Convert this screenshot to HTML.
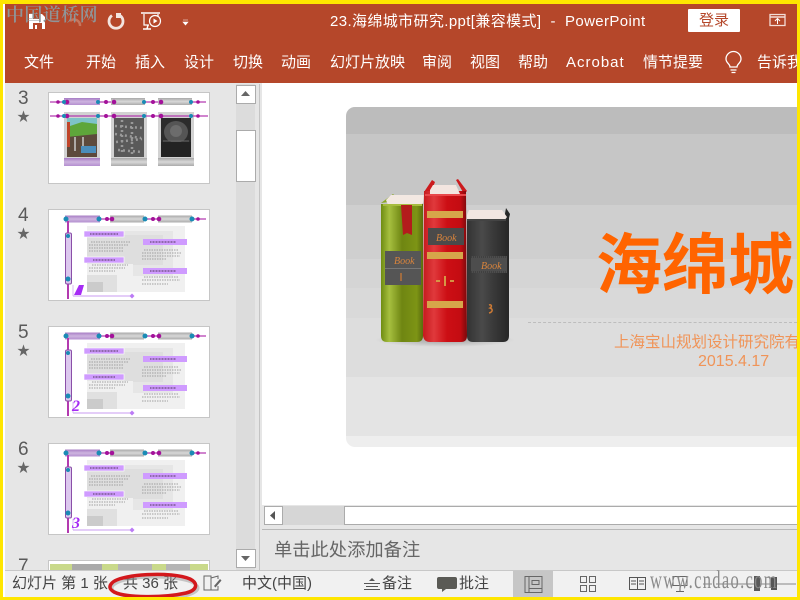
<!DOCTYPE html>
<html lang="zh"><head><meta charset="utf-8"><title>PowerPoint</title>
<style>
html,body{margin:0;padding:0;width:800px;height:600px;overflow:hidden;background:#ffe600}
body{position:relative;font-family:"Liberation Sans","Noto Sans CJK SC",sans-serif}
div,span,svg{position:absolute}
.t{white-space:nowrap;line-height:20px}
.r{color:#fff;font-size:15px;top:53px}
.n{color:#5a5a5a;font-size:19px;left:18px;line-height:22px}
.st{color:#666;font-size:13px;left:17px;line-height:16px}
.s{color:#444;font-size:15px;top:574px}
.thumb{left:48px;width:162px;height:92px}
</style></head><body>
<div style="left:3px;top:4px;width:794px;height:593px;background:#fff"></div>
<div style="left:5px;top:4px;width:792px;height:79px;background:#b5472a"></div>
<div style="left:5px;top:83px;width:257px;height:487px;background:#e6e6e6"></div>
<div style="left:236px;top:84px;width:19px;height:486px;background:#dcdcdc"></div>
<div style="left:259px;top:84px;width:1px;height:486px;background:#c4c4c4"></div>

<!-- QAT icons -->
<svg style="left:0;top:0" width="800" height="84" viewBox="0 0 800 84">
<path d="M29 14h13l3 3v12H29z" fill="#fff"/><path d="M33 14h7v5h-7zM33 23h9v6h-9z" fill="#b5472a"/><path d="M35 25h2v4h-2z" fill="#fff"/>
<path d="M70 21a6 6 0 0 1 10 5" fill="none" stroke="#cf8a73" stroke-width="2.500" opacity=".7"/>
<path d="M112 15.500a7 7 0 1 0 8 0" fill="none" stroke="#f3e4df" stroke-width="2.800"/><path d="M116 13h5v5l-5 0z" fill="#f3e4df"/>
<path d="M141 13h19" stroke="#fff" stroke-width="1.500"/><path d="M144 14v11h5M158 14v2" fill="none" stroke="#fff" stroke-width="1.200"/>
<circle cx="155" cy="21" r="5.500" fill="none" stroke="#fff" stroke-width="1.200"/><path d="M153.500 18.500l4 2.500-4 2.500z" fill="#fff"/>
<path d="M148 25l-1 4M143 29h8" stroke="#fff" stroke-width="1.500" fill="none"/>
<path d="M183 20h5M183 22h5l-2.500 3z" fill="#fff" stroke="#fff" stroke-width=".6"/>
<path d="M730 67c0-3-4-4-4-8a7.500 7.500 0 0 1 15 0c0 4-4 5-4 8zM730.500 70h6M731.500 72.500h4" fill="none" stroke="#fff" stroke-width="1.300"/>
<path d="M770 14.500h15v11h-15z" fill="none" stroke="#f3ddd6" stroke-width="1.300"/><path d="M770 17h15" stroke="#f3ddd6" stroke-width="1.500"/><path d="M777.500 24v-5M775 21l2.500-2.500 2.500 2.500" fill="none" stroke="#fff"/>
</svg>

<div class="t" style="left:330px;top:12px;color:#fff;font-size:15px;letter-spacing:.38px">23.海绵城市研究.ppt[兼容模式]&nbsp; - &nbsp;PowerPoint</div>
<div style="left:688px;top:9px;width:52px;height:23px;background:#fff;border-radius:1px"></div>
<div class="t" style="left:699px;top:11px;color:#b5472a;font-size:15px">登录</div>
<div class="t r" style="left:24px">文件</div>
<div class="t r" style="left:86px">开始</div>
<div class="t r" style="left:135px">插入</div>
<div class="t r" style="left:184px">设计</div>
<div class="t r" style="left:233px">切换</div>
<div class="t r" style="left:281px">动画</div>
<div class="t r" style="left:330px">幻灯片放映</div>
<div class="t r" style="left:422px">审阅</div>
<div class="t r" style="left:470px">视图</div>
<div class="t r" style="left:518px">帮助</div>
<div class="t r" style="left:566px;letter-spacing:1px">Acrobat</div>
<div class="t r" style="left:643px">情节提要</div>
<div class="t r" style="left:757px;width:40px;overflow:hidden">告诉我</div>

<!-- watermark -->
<div class="t" style="left:6px;top:3px;font-family:'Noto Serif CJK SC',serif;font-size:18px;letter-spacing:.4px;font-weight:600;color:#8f9598;line-height:22px">中国道桥网</div>

<!-- thumbnails -->
<svg width="0" height="0" style="left:0;top:0"><defs>
<linearGradient id="gb" x1="0" x2="0" y1="0" y2="1"><stop offset="0" stop-color="#a8a8a8"/><stop offset=".5" stop-color="#d8d8d8"/><stop offset="1" stop-color="#aaa"/></linearGradient>
<linearGradient id="pb" x1="0" x2="0" y1="0" y2="1"><stop offset="0" stop-color="#a77cc4"/><stop offset=".5" stop-color="#cdb4df"/><stop offset="1" stop-color="#b48fd0"/></linearGradient>
<g id="body">
<rect x=".5" y=".5" width="161" height="91" fill="#fff" stroke="#c6c6c6"/>
<rect x="39" y="17" width="98" height="66" fill="#f0f0f0"/><rect x="39" y="22" width="86" height="45" fill="#e6e6e6"/><rect x="39" y="26" width="76" height="30" fill="#dedede"/><rect x="39" y="55" width="46" height="28" fill="#f0f0f0"/><rect x="39" y="66" width="30" height="17" fill="#e0e0e0"/><rect x="39" y="73" width="16" height="10" fill="#cbcbcb"/>
<path d="M16 10h142" stroke="#b33ab0" stroke-width="1.300"/><rect x="17" y="6.500" width="35" height="7" fill="url(#pb)"/><rect x="62" y="6.500" width="34" height="7" fill="url(#gb)"/><rect x="110" y="6.500" width="34" height="7" fill="url(#gb)"/>
<g fill="#a3119a"><circle cx="59" cy="10" r="2"/><circle cx="64" cy="10" r="2.300"/><circle cx="105" cy="10" r="2"/><circle cx="111" cy="10" r="2.300"/><circle cx="150" cy="10" r="1.800"/></g>
<circle cx="18" cy="10" r="2.500" fill="#1a8bb5"/><circle cx="51" cy="10" r="2.500" fill="#1a8bb5"/><circle cx="97" cy="10" r="2.500" fill="#1a8bb5"/><circle cx="144" cy="10" r="2.500" fill="#1a8bb5"/>
<path d="M20 12v78" stroke="#b33ab0" stroke-width="2"/>
<rect x="17.500" y="24" width="6" height="51" rx="1.500" fill="#dcc7ee" stroke="#8a4fa8"/><circle cx="20" cy="27" r="2" fill="#1a8bb5"/><circle cx="20" cy="70" r="2.500" fill="#1a8bb5"/>
<path d="M25 87h58" stroke="#c89bf2"/><path d="M84 84.500l2.500 2.500-2.500 2.500-2.500-2.500z" fill="#bb7bf5"/>
<path d="M25 76v11" stroke="#d8b8f5"/>
<rect x="36" y="22" width="40" height="6" fill="#cf9bff" stroke="#fff" stroke-width=".6"/><rect x="95" y="30" width="44" height="6" fill="#cf9bff"/><rect x="36" y="48" width="40" height="6" fill="#cf9bff" stroke="#fff" stroke-width=".6"/><rect x="95" y="59" width="44" height="6" fill="#cf9bff"/>
<path d="M42 25h28M102 33h26M45 51h22M102 62h26" stroke="#7a5a90" stroke-width="1.500" stroke-dasharray="1 .5"/>
</g>
<g id="lines"><path d="M43 33h40M41 36h40M41 39h34M41 42h34M44 56h36M41 59h36M41 62h26M96 41h34M94 44h40M94 47h38M94 50h24M96 68h34M94 71h38M94 75h26" stroke="#a0a0a0" stroke-width="1" stroke-dasharray="1.500 1"/></g>
</defs></svg>

<svg class="thumb" style="top:92px" viewBox="0 0 162 92">
<rect x=".5" y=".5" width="161" height="91" fill="#fff" stroke="#c6c6c6"/>
<path d="M2 10h156" stroke="#b33ab0" stroke-width="1.200"/>
<rect x="16" y="6" width="36" height="7" fill="url(#pb)"/><rect x="63" y="6" width="34" height="7" fill="url(#gb)"/><rect x="110" y="6" width="34" height="7" fill="url(#gb)"/>
<rect x="16" y="20" width="36" height="47" fill="#d2d2d2"/><rect x="63" y="20" width="36" height="47" fill="#d2d2d2"/><rect x="110" y="20" width="36" height="47" fill="#d2d2d2"/>
<path d="M2 24h158" stroke="#b33ab0" stroke-width="1.200"/>
<rect x="19" y="26" width="30" height="39" fill="#5d4a3c"/><rect x="19" y="26" width="30" height="9" fill="#7ec3c8"/><path d="M19 35l15-5 15 2v10l-30 3z" fill="#5ea63a"/><rect x="33" y="54" width="15" height="7" fill="#4b8dbb"/><rect x="19" y="30" width="3" height="25" fill="#c0452a"/><path d="M27 45v14M35 45v9" stroke="#c9c9c9" stroke-width="1.500"/>
<rect x="66" y="26" width="30" height="39" fill="#5a5a5a"/><path d="M67 34l28 2M67 42l26 4M68 50l26-3M70 58l24 2M74 28v35M84 30v33" stroke="#999" stroke-width="2.500" stroke-dasharray="2 3"/>
<rect x="113" y="26" width="30" height="39" fill="#2c2c2c"/><ellipse cx="128" cy="40" rx="12" ry="11" fill="#555"/><ellipse cx="128" cy="39" rx="6" ry="6" fill="#6c6c6c"/><rect x="113" y="50" width="30" height="15" fill="#232323"/><path d="M115 49h26" stroke="#666"/>
<rect x="16" y="66" width="36" height="8" fill="url(#pb)"/><rect x="63" y="66" width="36" height="8" fill="url(#gb)"/><rect x="110" y="66" width="36" height="8" fill="url(#gb)"/>
<g fill="#a3119a"><circle cx="10" cy="10" r="1.800"/><circle cx="19" cy="10" r="2.300"/><circle cx="58" cy="10" r="2"/><circle cx="66" cy="10" r="2.300"/><circle cx="105" cy="10" r="2"/><circle cx="113" cy="10" r="2.300"/><circle cx="150" cy="10" r="1.800"/><circle cx="10" cy="24" r="1.800"/><circle cx="19" cy="24" r="2.300"/><circle cx="58" cy="24" r="2"/><circle cx="66" cy="24" r="2.300"/><circle cx="105" cy="24" r="2"/><circle cx="113" cy="24" r="2.300"/><circle cx="150" cy="24" r="1.800"/></g>
<g fill="#1a8bb5"><circle cx="16" cy="10" r="2"/><circle cx="50" cy="10" r="2"/><circle cx="96" cy="10" r="2"/><circle cx="143" cy="10" r="2"/><circle cx="16" cy="24" r="2"/><circle cx="50" cy="24" r="2"/><circle cx="96" cy="24" r="2"/><circle cx="143" cy="24" r="2"/></g>
</svg>
<svg class="thumb" style="top:209px" viewBox="0 0 162 92"><use href="#body"/><use href="#lines"/><path d="M26 86l5-10h5l-3 10z" fill="#a62cf5"/></svg>
<svg class="thumb" style="top:326px" viewBox="0 0 162 92"><use href="#body"/><use href="#lines"/><text x="24" y="85" font-family="Liberation Serif" font-style="italic" font-weight="bold" font-size="16" fill="#a62cf5">2</text></svg>
<svg class="thumb" style="top:443px" viewBox="0 0 162 92"><use href="#body"/><use href="#lines"/><text x="24" y="85" font-family="Liberation Serif" font-style="italic" font-weight="bold" font-size="16" fill="#a62cf5">3</text></svg>
<svg class="thumb" style="top:560px;height:10px" width="162" height="10" viewBox="0 0 162 10"><rect x=".5" y=".5" width="161" height="20" fill="#fff" stroke="#c6c6c6"/><rect x="2" y="4" width="158" height="6" fill="#c9d98a"/><rect x="24" y="4" width="30" height="6" fill="#aaa"/><rect x="70" y="4" width="34" height="6" fill="#b5b5b5"/><rect x="118" y="4" width="24" height="6" fill="#b5b5b5"/></svg>

<div class="t n" style="top:88px">3</div><div class="t st" style="top:109px">★</div>
<div class="t n" style="top:205px">4</div><div class="t st" style="top:226px">★</div>
<div class="t n" style="top:322px">5</div><div class="t st" style="top:343px">★</div>
<div class="t n" style="top:439px">6</div><div class="t st" style="top:460px">★</div>
<div class="t n" style="top:556px;height:14px;overflow:hidden">7</div>

<!-- left scroll -->
<div style="left:236px;top:85px;width:18px;height:17px;background:#fff;border:1px solid #ababab"></div>
<svg style="left:240px;top:90px" width="11" height="7"><path d="M1 6h9L5.500 1z" fill="#666"/></svg>
<div style="left:236px;top:130px;width:18px;height:50px;background:#fff;border:1px solid #ababab"></div>
<div style="left:236px;top:549px;width:18px;height:17px;background:#fff;border:1px solid #ababab"></div>
<svg style="left:240px;top:555px" width="11" height="7"><path d="M1 1h9L5.500 6z" fill="#666"/></svg>

<!-- slide -->
<div style="left:346px;top:107px;width:451px;height:340px;border-radius:9px 0 0 9px;overflow:hidden;background:#eee">
<div style="left:0;top:0;width:451px;height:27px;background:#bcbcbc"></div>
<div style="left:0;top:27px;width:451px;height:71px;background:#c6c6c6"></div>
<div style="left:0;top:98px;width:451px;height:54px;background:#cfcfcf"></div>
<div style="left:0;top:152px;width:451px;height:29px;background:#d5d5d5"></div>
<div style="left:0;top:181px;width:451px;height:30px;background:#d9d9d9"></div>
<div style="left:0;top:211px;width:451px;height:59px;background:#dddddd"></div>
<div style="left:0;top:270px;width:451px;height:59px;background:#e4e4e4"></div>
</div>
<div style="left:528px;top:322px;width:269px;border-top:1px dashed #bdbdbd"></div>
<div class="t" style="left:596px;top:212px;font-size:66px;line-height:96px;font-weight:700;color:#ff6400;font-family:'Noto Sans CJK SC',sans-serif;width:201px;overflow:hidden">海绵城</div>
<div class="t" style="left:614px;top:333px;font-size:15.500px;color:#f09458;width:183px;overflow:hidden">上海宝山规划设计研究院有限公司</div>
<div class="t" style="left:698px;top:352px;font-size:16px;color:#f09458">2015.4.17</div>

<!-- books -->
<svg style="left:370px;top:175px" width="150" height="175" viewBox="370 175 150 175">
<defs>
<linearGradient id="g1" x1="0" x2="1" y1="0" y2="0"><stop offset="0" stop-color="#6f8c12"/><stop offset=".2" stop-color="#a6bf3f"/><stop offset=".5" stop-color="#6f8612"/><stop offset=".85" stop-color="#7d9415"/><stop offset="1" stop-color="#5a6c0d"/></linearGradient>
<linearGradient id="g2" x1="0" x2="1" y1="0" y2="0"><stop offset="0" stop-color="#c41a1d"/><stop offset=".25" stop-color="#e0393c"/><stop offset=".55" stop-color="#cc0e14"/><stop offset=".85" stop-color="#c40c12"/><stop offset="1" stop-color="#7a0a0c"/></linearGradient>
<linearGradient id="g3" x1="0" x2="1" y1="0" y2="0"><stop offset="0" stop-color="#333"/><stop offset=".35" stop-color="#4a4a4a"/><stop offset=".6" stop-color="#3a3a3a"/><stop offset="1" stop-color="#252525"/></linearGradient>
<radialGradient id="sh"><stop offset="0" stop-color="#888" stop-opacity=".7"/><stop offset="1" stop-color="#888" stop-opacity="0"/></radialGradient>
</defs>
<ellipse cx="445" cy="340" rx="70" ry="7" fill="url(#sh)"/>
<path d="M467 219h37l2-11 4 6-1 4v118q0 6-6 6h-30q-6 0-6-6z" fill="url(#g3)"/>
<path d="M467 215l2-5h33l5 7-3 4h-37z" fill="#f2e6e2"/><path d="M467 220h39" stroke="#444" stroke-width="2"/>
<rect x="471" y="256" width="36" height="17" fill="#4d4d4d"/><path d="M471 257h36M471 272h36" stroke="#333" stroke-dasharray="1 1"/>
<text x="481" y="269" font-family="Liberation Serif" font-style="italic" font-size="10" fill="#d9843c">Book</text>
<path d="M489 305c3-1 3 2 1 3 3 1 3 4-1 5" fill="none" stroke="#cc7a35" stroke-width="1.500"/>
<path d="M381 203l12-9 2 2-6 6z" fill="#8aa825"/>
<path d="M381 204l7 0h35v132q0 6-6 6h-30q-6 0-6-6z" fill="url(#g1)"/>
<path d="M386 200l5-5h33l-1 8-3 2h-32z" fill="#f3e8e2"/><path d="M383 205h39" stroke="#a7bc3f" stroke-width="2"/>
<rect x="385" y="251" width="36" height="17" fill="#565656"/><rect x="385" y="269" width="36" height="16" fill="#555"/><path d="M385 268.500h36" stroke="#777"/>
<text x="394" y="264" font-family="Liberation Serif" font-style="italic" font-size="10" fill="#d9843c">Book</text>
<path d="M401 273v8" stroke="#c87a35" stroke-width="1.300"/>
<path d="M401 205h11v30l-5-2-4 2z" fill="#b31c1c"/>
<path d="M424 192l8-12 3 2-4 10zM456 180l2-1 9 12-3 3z" fill="#cc1a1d"/>
<path d="M424 191h42v1l1 144q0 6-6 6h-31q-6 0-7-6z" fill="url(#g2)"/>
<path d="M430 190l3-5h23l4 9-2 1h-28z" fill="#f3e5e0"/><path d="M425 195h41" stroke="#e8474a" stroke-width="2"/>
<rect x="427" y="211" width="36" height="7" fill="#d6a64a"/><rect x="428" y="228" width="36" height="17" fill="#4a4a4a"/>
<text x="436" y="241" font-family="Liberation Serif" font-style="italic" font-size="10" fill="#d9843c">Book</text>
<rect x="427" y="252" width="36" height="7" fill="#d6a64a"/><rect x="427" y="301" width="36" height="7" fill="#d6a64a"/>
<path d="M445 276v10M440 281h-4M450 281h4" stroke="#d6a64a" stroke-width="1.800"/>
</svg>

<!-- horizontal scroll -->
<div style="left:262px;top:505px;width:535px;height:24px;background:#e6e6e6"></div>
<div style="left:282px;top:506px;width:62px;height:19px;background:#d6d6d6"></div>
<div style="left:264px;top:506px;width:17px;height:17px;background:#fff;border:1px solid #ababab"></div>
<svg style="left:269px;top:510px" width="8" height="11"><path d="M6 1v9L1 5.500z" fill="#555"/></svg>
<div style="left:344px;top:506px;width:453px;height:17px;background:#fff;border:1px solid #ababab;border-right:0"></div>
<div style="left:262px;top:529px;width:535px;height:41px;background:#e6e6e6;border-top:1px solid #b8b8b8;box-sizing:border-box"></div>
<div class="t" style="left:274px;top:540px;font-size:18.300px;color:#666">单击此处添加备注</div>

<!-- status bar -->
<div style="left:5px;top:570px;width:792px;height:27px;background:#f1f1f1;border-top:1px solid #c8c8c8;box-sizing:border-box"></div>
<div style="left:513px;top:571px;width:40px;height:26px;background:#c6c6c6"></div>
<div class="t s" style="left:12px">幻灯片 第 1 张</div>
<div class="t s" style="left:123px">共 36 张</div>
<div class="t s" style="left:242px">中文(中国)</div>
<div class="t s" style="left:382px">备注</div>
<div class="t s" style="left:459px">批注</div>
<svg style="left:0;top:570px" width="800" height="30" viewBox="0 570 800 30">
<path d="M204 576h7v14h-7zM211 578l7-2v3M218 586v4h-7" fill="none" stroke="#666"/><path d="M214 586l6-7 1.500 1.500-6 7z" fill="#666"/>
<path d="M369 581l3-3 3 3z" fill="#555"/><path d="M364 583.500h16M366 586.500h12M364 589.500h16" stroke="#555" stroke-width="1"/>
<path d="M439 577h16q2 0 2 2v8q0 2-2 2h-9l-4 3v-3h-3q-2 0-2-2v-8q0-2 2-2z" fill="#5a5a55"/>
<path d="M525 576.500h17v16h-17zM529 576.500v16M529 588.500h13M532 580.500h7v4h-7z" fill="none" stroke="#666"/>
<path d="M580.500 576.500h6v6h-6zM589.500 576.500h6v6h-6zM580.500 585.500h6v6h-6zM589.500 585.500h6v6h-6z" fill="none" stroke="#666"/>
<path d="M629.500 577.500h16v12h-16zM637.500 577.500v12M631 581h5M631 584h5M639 581h5M639 584h5" fill="none" stroke="#555"/>
<path d="M673 576.500h14v9h-14zM680 586v5M676 591.500h8" fill="none" stroke="#666"/>
<path d="M703 584h9M716 584h80" stroke="#888"/>
<rect x="754" y="576" width="6" height="15" fill="#5a5a5a"/><rect x="771" y="577" width="6" height="13" fill="#555"/>
</svg>
<div class="t" style="left:650px;top:565px;font-family:'Liberation Serif',serif;font-size:25px;line-height:32px;color:#8a8a8a;transform:scaleX(.66);transform-origin:0 0;letter-spacing:2px">www.cndao.com</div>

<!-- red ellipse -->
<svg style="left:100px;top:565px" width="105" height="35" viewBox="100 565 105 35">
<ellipse cx="155" cy="588" rx="43" ry="11" fill="none" stroke="#999" stroke-width="3" opacity=".5"/>
<path d="M112 583c8-9 60-12 78-4 8 4 8 11-4 14-22 5-60 5-72-1-5-3-5-6-2-9z" fill="none" stroke="#d3181c" stroke-width="3.500"/>
</svg>

<!-- frame -->
<div style="left:0;top:0;width:800px;height:4px;background:#ffe600"></div>
<div style="left:0;top:0;width:3px;height:600px;background:#ffe600"></div>
<div style="left:797px;top:0;width:3px;height:600px;background:#ffe600"></div>
<div style="left:0;top:597px;width:800px;height:3px;background:#ffe600"></div>
</body></html>
